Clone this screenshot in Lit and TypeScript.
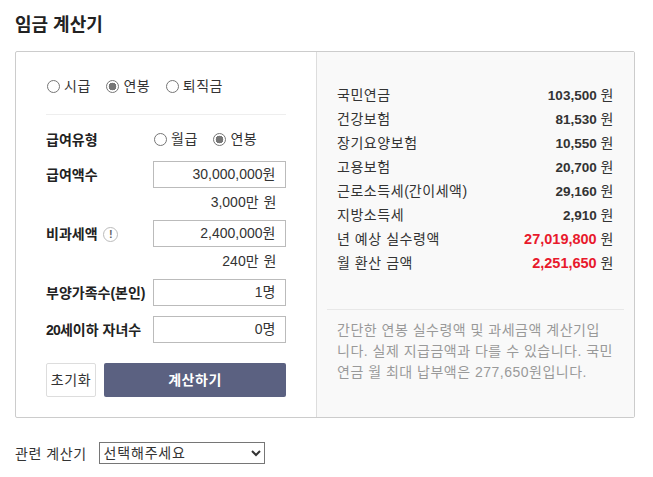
import { LitElement, html, css } from 'lit';
import { customElement } from 'lit/decorators.js';

const DEDUCTIONS = [
  { label: '국민연금', value: '103,500' },
  { label: '건강보험', value: '81,530' },
  { label: '장기요양보험', value: '10,550' },
  { label: '고용보험', value: '20,700' },
  { label: '근로소득세(간이세액)', value: '29,160' },
  { label: '지방소득세', value: '2,910' },
  { label: '년 예상 실수령액', value: '27,019,800', red: true },
  { label: '월 환산 금액', value: '2,251,650', red: true },
];

// hangul runs come out narrower than in the reference, so they get their own spacing
const ko = (text: string) =>
  text
    .split(/([\uac00-\ud7a3][\uac00-\ud7a3 ]*)/)
    .map((part) => (/[\uac00-\ud7a3]/.test(part) ? html`<span class="ko">${part}</span>` : part));

@customElement('app-root')
export class AppRoot extends LitElement {
  static styles = css`
    :host {
      display: block;
      width: 653px;
      height: 477px;
      overflow: hidden;
      background: #fff;
      color: #333;
      font-family: "Liberation Sans", "Noto Sans CJK KR", sans-serif;
      font-size: 14px;
    }
    .ko {
      letter-spacing: 0.55px;
    }
    .page {
      padding: 14px 18px 0 15px;
    }
    h1 {
      margin: 0 0 15px;
      font-size: 18px;
      line-height: 22px;
      font-weight: 700;
      color: #222;
    }
    .panel {
      display: flex;
      height: 367px;
      box-sizing: border-box;
      border: 1px solid #ccc;
      border-radius: 2px;
    }
    .left {
      width: 301px;
      box-sizing: border-box;
      padding: 23px 30px 0 30px;
      border-right: 1px solid #ddd;
    }
    .right {
      flex: 1;
      background: #f9f9f9;
      padding: 31px 10px 0 10px;
    }
    .radios {
      display: flex;
      align-items: center;
      height: 20px;
    }
    .radio {
      display: flex;
      align-items: center;
      margin-right: 15.5px;
    }
    .radio:last-child {
      margin-right: 0;
    }
    .radio input {
      appearance: none;
      box-sizing: border-box;
      width: 13px;
      height: 13px;
      margin: 2px 4px 0 0;
      border: 1px solid #767676;
      border-radius: 50%;
      background: #fff;
    }
    .radio input:checked {
      background: radial-gradient(circle, #767676 0 3.6px, #fff 4.1px);
    }
    .top {
      padding: 0 0 19px 1px;
      border-bottom: 1px solid #eee;
      margin-bottom: 14px;
    }
    .row {
      display: flex;
      align-items: center;
      justify-content: space-between;
    }
    .row > .name {
      margin-top: -2px;
      font-weight: 700;
      color: #222;
    }
    .name .ko {
      letter-spacing: 0;
    }
    .kind {
      height: 20px;
      margin-bottom: 12px;
    }
    .kind > .name {
      margin-top: 0;
    }
    .kind .radios {
      width: 133px;
      margin-top: -2px;
      padding-left: 1px;
      box-sizing: border-box;
    }
    .field {
      width: 133px;
      height: 27px;
      box-sizing: border-box;
      padding: 0 9px 0 0;
      border: 1px solid #bbb;
      text-align: right;
      line-height: 24px;
      background: #fff;
    }
    .hint {
      height: 32px;
      line-height: 28px;
      text-align: right;
      padding-right: 9px;
    }
    .tip {
      display: inline-block;
      box-sizing: border-box;
      width: 15px;
      height: 15px;
      margin-left: 2px;
      border: 1px solid #bbb;
      border-radius: 50%;
      color: #666;
      font-size: 11px;
      line-height: 13px;
      text-align: center;
      vertical-align: 1px;
    }
    .tight {
      margin-bottom: 10px;
    }
    .twenty {
      letter-spacing: -0.8px;
    }
    .buttons {
      display: flex;
      justify-content: space-between;
      margin-top: 20px;
    }
    button {
      height: 34px;
      box-sizing: border-box;
      font-family: inherit;
      border-radius: 2px;
      padding: 0 0 2px;
    }
    .reset {
      width: 50px;
      border: 1px solid #ddd;
      background: #fff;
      color: #333;
      font-size: 14px;
    }
    .submit {
      width: 182px;
      border: 0;
      background: #5b6181;
      color: #fff;
      font-size: 14px;
      font-weight: 700;
    }
    .line {
      display: flex;
      justify-content: space-between;
      height: 24px;
      line-height: 24px;
      padding: 0 10px;
    }
    .line b {
      font-size: 13.5px;
      font-weight: 700;
    }
    .line b.red {
      font-size: 14.5px;
      color: #e8192c;
    }
    .note {
      margin-top: 34px;
      padding: 10px 10px 0;
      border-top: 1px solid #e8e8e8;
      color: #999;
      line-height: 21px;
      letter-spacing: 0.5px;
      white-space: nowrap;
    }
    .related {
      display: flex;
      align-items: center;
      margin-top: 24px;
    }
    .related > span {
      margin-right: 12px;
    }
    select {
      width: 166px;
      height: 22px;
      font-family: inherit;
      font-size: 14px;
      letter-spacing: 0.8px;
      color: #333;
      background: #fff;
      border: 1px solid #767676;
      border-radius: 0;
    }
  `;

  radio(label: string, checked = false) {
    return html`<span class="radio"><input type="radio" .checked=${checked} />${ko(label)}</span>`;
  }

  render() {
    return html`
      <div class="page">
        <h1>임금 계산기</h1>
        <div class="panel">
          <div class="left">
            <div class="radios top">
              ${this.radio('시급')}${this.radio('연봉', true)}${this.radio('퇴직금')}
            </div>
            <div class="row kind">
              <div class="name">${ko('급여유형')}</div>
              <div class="radios">${this.radio('월급')}${this.radio('연봉', true)}</div>
            </div>
            <div class="row">
              <div class="name">${ko('급여액수')}</div>
              <div class="field">${ko('30,000,000원')}</div>
            </div>
            <div class="hint">${ko('3,000만 원')}</div>
            <div class="row">
              <div class="name">${ko('비과세액')} <span class="tip">!</span></div>
              <div class="field">${ko('2,400,000원')}</div>
            </div>
            <div class="hint">${ko('240만 원')}</div>
            <div class="row tight">
              <div class="name">${ko('부양가족수(본인)')}</div>
              <div class="field">${ko('1명')}</div>
            </div>
            <div class="row">
              <div class="name"><span class="twenty">20</span>${ko('세이하 자녀수')}</div>
              <div class="field">${ko('0명')}</div>
            </div>
            <div class="buttons">
              <button class="reset">${ko('초기화')}</button>
              <button class="submit">${ko('계산하기')}</button>
            </div>
          </div>
          <div class="right">
            ${DEDUCTIONS.map(
              (d) => html`<div class="line">
                <span>${ko(d.label)}</span>
                <span><b class=${d.red ? 'red' : ''}>${d.value}</b> ${ko('원')}</span>
              </div>`
            )}
            <div class="note">간단한 연봉 실수령액 및 과세금액 계산기입<br />니다. 실제 지급금액과 다를 수 있습니다. 국민<br />연금 월 최대 납부액은 277,650원입니다.</div>
          </div>
        </div>
        <div class="related">
          <span>${ko('관련 계산기')}</span>
          <select><option>선택해주세요</option></select>
        </div>
      </div>
    `;
  }
}
